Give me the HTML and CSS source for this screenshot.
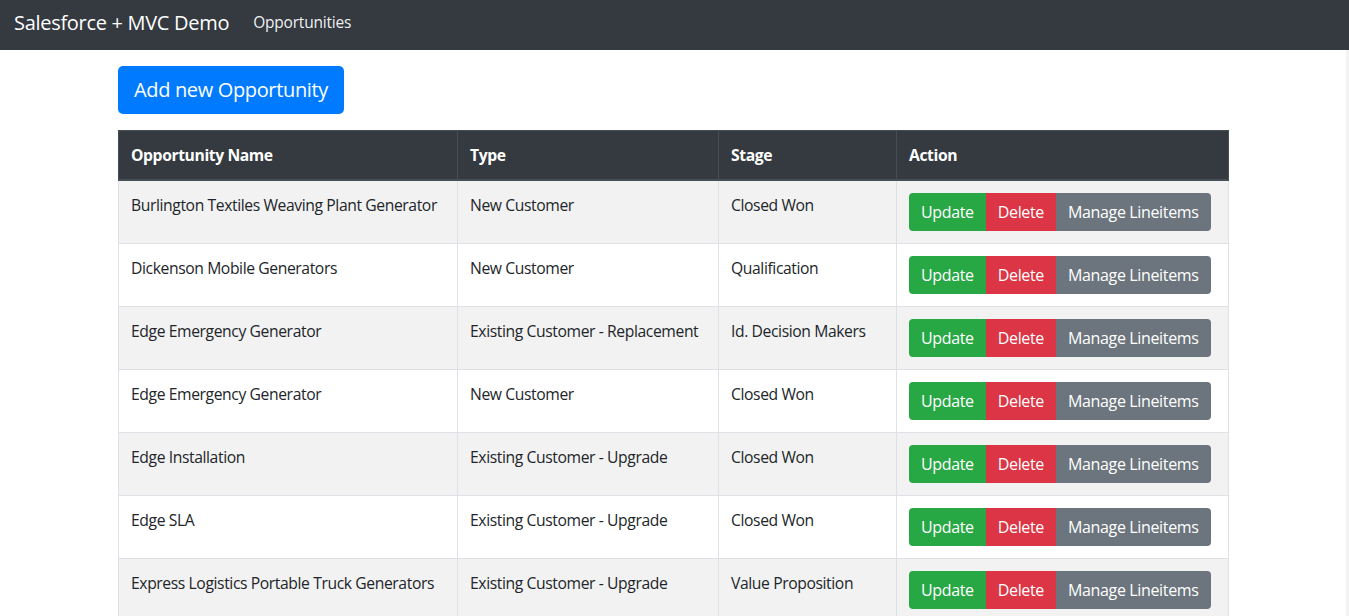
FILE: index.html
```html
<!DOCTYPE html>
<html lang="en">
<head>
<meta charset="utf-8">
<title>Opportunities - Salesforce + MVC Demo</title>
<link rel="stylesheet" href="styles.css">
</head>
<body>
<nav class="navbar">
  <a class="brand" href="#">Salesforce + MVC Demo</a>
  <a class="nav-link" href="#">Opportunities</a>
</nav>
<div class="page">
<main class="container">
  <a class="btn btn-lg btn-primary" href="#">Add new Opportunity</a>
  <table class="table">
    <colgroup>
      <col class="c-name"><col class="c-type"><col class="c-stage"><col class="c-action">
    </colgroup>
    <thead>
      <tr><th>Opportunity Name</th><th>Type</th><th>Stage</th><th>Action</th></tr>
    </thead>
    <tbody>
      <tr><td>Burlington Textiles Weaving Plant Generator</td><td>New Customer</td><td>Closed Won</td>
        <td class="actions"><div class="btn-group"><a class="btn btn-success" href="#">Update</a><a class="btn btn-danger" href="#">Delete</a><a class="btn btn-secondary" href="#">Manage Lineitems</a></div></td></tr>
      <tr><td>Dickenson Mobile Generators</td><td>New Customer</td><td>Qualification</td>
        <td class="actions"><div class="btn-group"><a class="btn btn-success" href="#">Update</a><a class="btn btn-danger" href="#">Delete</a><a class="btn btn-secondary" href="#">Manage Lineitems</a></div></td></tr>
      <tr><td>Edge Emergency Generator</td><td>Existing Customer - Replacement</td><td>Id. Decision Makers</td>
        <td class="actions"><div class="btn-group"><a class="btn btn-success" href="#">Update</a><a class="btn btn-danger" href="#">Delete</a><a class="btn btn-secondary" href="#">Manage Lineitems</a></div></td></tr>
      <tr><td>Edge Emergency Generator</td><td>New Customer</td><td>Closed Won</td>
        <td class="actions"><div class="btn-group"><a class="btn btn-success" href="#">Update</a><a class="btn btn-danger" href="#">Delete</a><a class="btn btn-secondary" href="#">Manage Lineitems</a></div></td></tr>
      <tr><td>Edge Installation</td><td>Existing Customer - Upgrade</td><td>Closed Won</td>
        <td class="actions"><div class="btn-group"><a class="btn btn-success" href="#">Update</a><a class="btn btn-danger" href="#">Delete</a><a class="btn btn-secondary" href="#">Manage Lineitems</a></div></td></tr>
      <tr><td>Edge SLA</td><td>Existing Customer - Upgrade</td><td>Closed Won</td>
        <td class="actions"><div class="btn-group"><a class="btn btn-success" href="#">Update</a><a class="btn btn-danger" href="#">Delete</a><a class="btn btn-secondary" href="#">Manage Lineitems</a></div></td></tr>
      <tr><td>Express Logistics Portable Truck Generators</td><td>Existing Customer - Upgrade</td><td>Value Proposition</td>
        <td class="actions"><div class="btn-group"><a class="btn btn-success" href="#">Update</a><a class="btn btn-danger" href="#">Delete</a><a class="btn btn-secondary" href="#">Manage Lineitems</a></div></td></tr>
    </tbody>
  </table>
</main>
</div>
</body>
</html>
```

FILE: styles.css
```css
* { box-sizing: border-box; }
html, body { margin: 0; padding: 0; }
body {
  font-family: "Open Sans", "Noto Sans", "Liberation Sans", sans-serif;
  font-size: 16px;
  line-height: 1.5;
  color: #212529;
  background: #f3f3f3;
}
a { text-decoration: none; }

.navbar {
  display: flex;
  align-items: center;
  height: 50px;
  padding: 0 16px 5px 14px;
  background: #343a40;
}
.brand {
  color: #fff;
  font-size: 20px;
  line-height: 30px;
  margin-right: 16px;
  letter-spacing: -0.3px;
}
.nav-link {
  color: rgba(255,255,255,.95);
  font-size: 15.5px;
  padding: 0 8px;
  letter-spacing: -0.2px;
}

.page {
  margin-right: 3px;
  background: #fff;
}

.container {
  width: 1140px;
  margin: 0 auto;
  padding: 16px 15px 0;
  display: flex;
  flex-direction: column;
  align-items: flex-start;
}

.btn {
  display: inline-block;
  color: #fff;
  font-size: 16px;
  line-height: 24px;
  padding: 7px 12px;
  border-radius: 4px;
  white-space: nowrap;
  letter-spacing: -0.35px;
}
.btn-lg {
  font-size: 20px;
  line-height: 30px;
  padding: 9px 16px;
  border-radius: 5px;
}
.btn-primary { background: #007bff; }
.btn-success { background: #28a745; }
.btn-danger { background: #dc3545; }
.btn-secondary { background: #6c757d; }

.btn-group { display: inline-flex; }
.btn-group .btn { border-radius: 0; }
.btn-group .btn:first-child { border-radius: 4px 0 0 4px; }
.btn-group .btn:last-child { border-radius: 0 4px 4px 0; }

.table {
  width: 1110px;
  margin-top: 16px;
  border-collapse: collapse;
  table-layout: fixed;
}
.c-name { width: 339px; }
.c-type { width: 261px; }
.c-stage { width: 178px; }
.c-action { width: 332px; }

.table th, .table td {
  padding: 13px 12px 11px;
  vertical-align: top;
  text-align: left;
  border: 1px solid #dee2e6;
  font-size: 15.7px;
  letter-spacing: -0.4px;
  white-space: nowrap;
}
.table td.actions { padding: 12px; }
.table thead th {
  background: #343a40;
  color: #fff;
  border-color: #454d55;
  border-bottom-width: 2px;
  font-weight: 700;
}
.table tbody tr:nth-child(odd) { background: #f2f2f2; }
.table tbody tr:nth-child(even) { background: #fff; }
```
